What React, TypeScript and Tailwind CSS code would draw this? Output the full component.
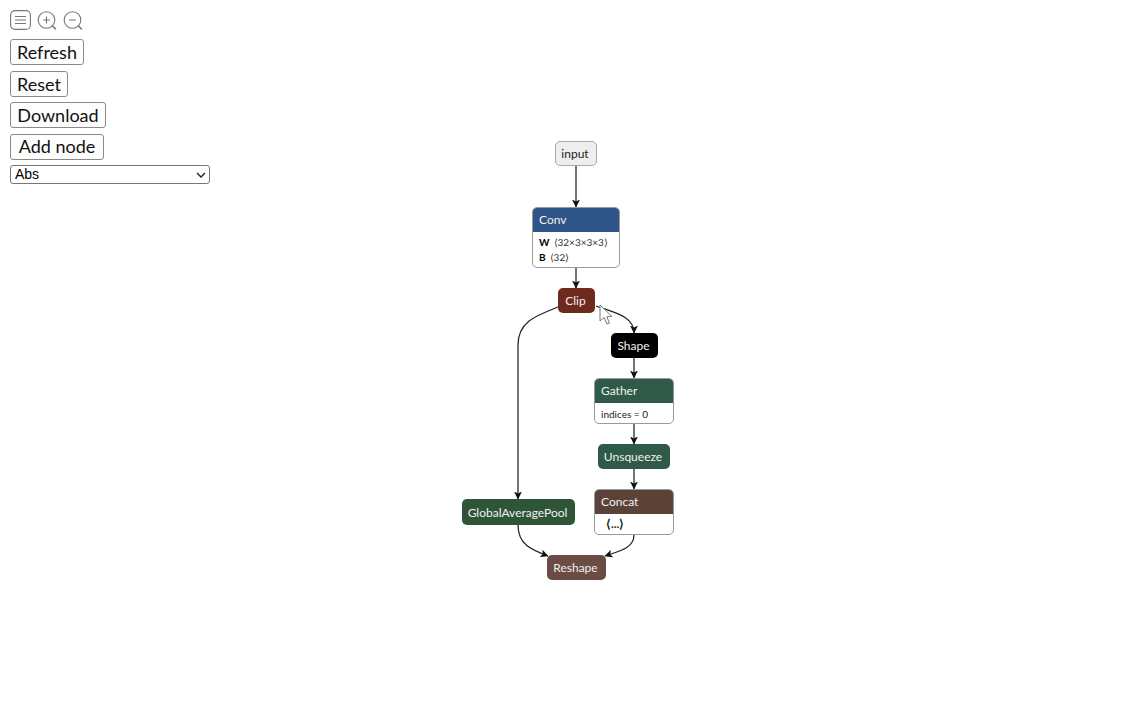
const sans = "font-['Lato','Open_Sans',sans-serif]";

function Tool({ label, cls }: { label: string; cls: string }) {
  return (
    <button className={`flex h-[26px] items-center justify-center rounded-[3px] border border-[#8a8a8a] bg-[#fdfdfd] text-[18px] leading-[24px] text-[#111] font-['Lato',sans-serif] ${cls}`}>
      {label}
    </button>
  );
}

function Magnifier({ minus }: { minus?: boolean }) {
  return (
    <svg width="20" height="20" viewBox="0 0 20 20" fill="none" stroke="#777" strokeWidth="1.1" strokeLinecap="round">
      <circle cx="9.5" cy="10" r="8.3" />
      <path d="M15.5 16 L18.5 19" strokeWidth="1.6" />
      <path d="M6.5 10 H12.5" />
      {!minus && <path d="M9.5 7 V13" />}
    </svg>
  );
}

function Plain({ label, cls }: { label: string; cls: string }) {
  return (
    <div className={`absolute flex items-center justify-center rounded-[5px] pr-[2px] pt-px text-[12px] text-[#f0f0f0] ${cls}`}>
      {label}
    </div>
  );
}

function Card({ label, cls, head, children }: { label: string; cls: string; head: string; children: React.ReactNode }) {
  return (
    <div className={`absolute overflow-hidden rounded-[5px] border border-[#999] bg-white ${cls}`}>
      <div className={`-mx-px -mt-px flex h-[25px] items-center px-[7px] pt-px text-[12px] text-[#f0f0f0] ${head}`}>{label}</div>
      {children}
    </div>
  );
}

function Edges() {
  const c = "#222";
  return (
    <svg className="absolute left-0 top-0" width="1136" height="720" fill="none" stroke={c} strokeWidth="1.25">
      <defs>
        <marker id="a" viewBox="0 0 8 8" refX="7.5" refY="4" markerWidth="8" markerHeight="8" orient="auto" markerUnits="userSpaceOnUse">
          <path d="M0 0 L8 4 L0 8 L2 4 Z" fill="#111" stroke="none" />
        </marker>
      </defs>
      <path d="M576 166 V207" markerEnd="url(#a)" />
      <path d="M576 268 V288" markerEnd="url(#a)" />
      <path d="M596 306 C615 313 634 316 634 333" markerEnd="url(#a)" />
      <path d="M634 358 V378" markerEnd="url(#a)" />
      <path d="M634 424 V444" markerEnd="url(#a)" />
      <path d="M634 469 V489" markerEnd="url(#a)" />
      <path d="M558 307 C535 316 518 322 518 345 V499" markerEnd="url(#a)" />
      <path d="M518 525 C518 545 532 550 548 556" markerEnd="url(#a)" />
      <path d="M634 535 C634 548 620 551 605 556" markerEnd="url(#a)" />
    </svg>
  );
}

export default function App() {
  return (
    <div className={`relative h-[720px] w-[1136px] overflow-hidden bg-white ${sans}`}>
      <div className="flex flex-col gap-[5.5px] pl-[10px] pt-[10px]">
        <div className="flex h-[23.5px] items-start gap-[6px]">
          <svg width="21" height="20" viewBox="0 0 21 20" fill="none" stroke="#777" strokeWidth="1.1">
            <rect x="0.6" y="0.6" width="19.8" height="18.8" rx="4.5" />
            <path d="M5 6.5 H16 M5 10 H16 M5 13.5 H16" />
          </svg>
          <Magnifier />
          <Magnifier minus />
        </div>
        <Tool label="Refresh" cls="w-[74px]" />
        <Tool label="Reset" cls="w-[58px]" />
        <Tool label="Download" cls="w-[96px]" />
        <Tool label="Add node" cls="w-[94px] pb-[2px]" />
        <div className="relative -mt-[0.5px] h-[19px] w-[200px]">
          <select className="block h-[19px] w-[200px] appearance-none rounded-[3px] border border-[#767676] bg-white pl-[4px] text-[14px] leading-[16px] text-black font-['Liberation_Sans',sans-serif]">
            <option>Abs</option>
          </select>
          <svg className="pointer-events-none absolute left-[186px] top-[7px]" width="10" height="6" viewBox="0 0 10 6" fill="none" stroke="#222" strokeWidth="1.4">
            <path d="M1 1 L5 5 L9 1" />
          </svg>
        </div>
      </div>

      <Edges />

      <Plain label="input" cls="left-[555px] top-[141px] h-[25px] w-[42px] border border-[#aaa] bg-[#eeeeee] !text-[#222]" />
      <Card label="Conv" cls="left-[532px] top-[207px] h-[61px] w-[88px]" head="bg-[#2f5488]">
        <div className="px-[6px] pt-[3px] text-[10px] leading-[15px] text-[#333]">
          <div className="flex gap-[4px]"><b className="text-black">W</b><span>⟨32×3×3×3⟩</span></div>
          <div className="flex gap-[4px]"><b className="text-black">B</b><span>⟨32⟩</span></div>
        </div>
      </Card>
      <Plain label="Clip" cls="left-[558px] top-[288px] h-[25px] w-[37px] bg-[#6f2a1e]" />
      <Plain label="Shape" cls="left-[611px] top-[333px] h-[25px] w-[47px] bg-black" />
      <Card label="Gather" cls="left-[594px] top-[378px] h-[46px] w-[80px]" head="bg-[#2e5a47]">
        <div className="px-[6px] pt-[4px] text-[10px] leading-[14px] text-[#222]">indices = 0</div>
      </Card>
      <Plain label="Unsqueeze" cls="left-[598px] top-[444px] h-[25px] w-[72px] bg-[#2e5a47]" />
      <Card label="Concat" cls="left-[594px] top-[489px] h-[46px] w-[80px]" head="bg-[#5a4238]">
        <div className="px-[11px] pt-[3px] text-[11.5px] font-bold leading-[14px] text-[#222]">⟨...⟩</div>
      </Card>
      <Plain label="GlobalAveragePool" cls="left-[462px] top-[499px] h-[26px] w-[113px] bg-[#2f5538]" />
      <Plain label="Reshape" cls="left-[547px] top-[555px] h-[25px] w-[59px] bg-[#6b4c45]" />

      <svg className="absolute left-[599px] top-[304px]" width="14" height="22" viewBox="0 0 14 22">
        <path d="M1 1 V17 L5 13.5 L8 20 L10.5 19 L7.8 12.8 L13 12.5 Z" fill="#fff" stroke="#777" strokeWidth="1" />
      </svg>
    </div>
  );
}
